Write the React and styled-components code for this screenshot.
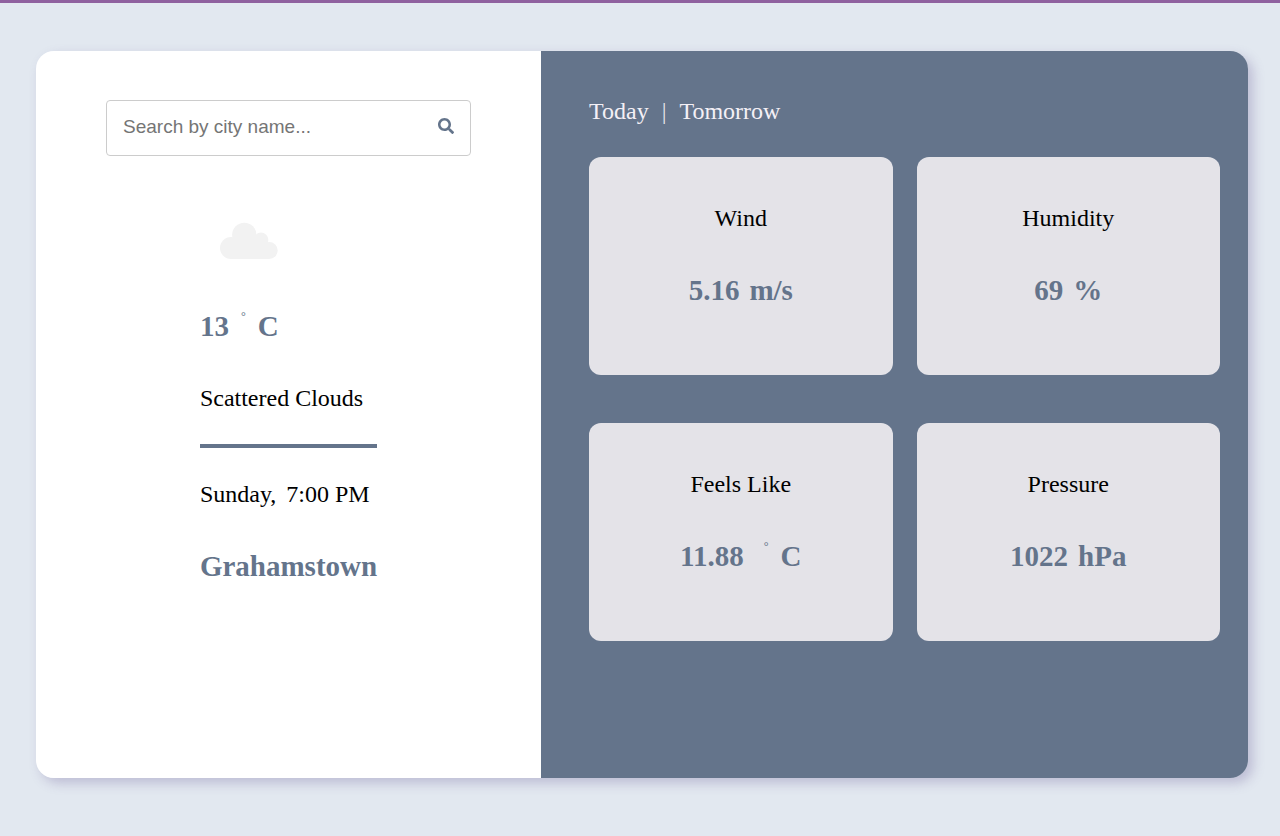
import React from "react";
import styled, { createGlobalStyle } from "styled-components";
import { FaSearch } from "react-icons/fa";

const slate = "#64748b";

const GlobalStyle = createGlobalStyle`
  *, *::before, *::after { box-sizing: border-box; }
  body {
    margin: 0;
    background: #e2e8f0;
    color: #000;
    font-family: "Liberation Serif", "Times New Roman", serif;
    font-size: 24px;
  }
`;

const Page = styled.div`
  display: flex;
  min-height: 100vh;
  padding: 48px 32px 58px 36px;
  border-top: 3px solid #8f619f;
`;

const Panel = styled.main`
  flex: 1;
  display: grid;
  grid-template-columns: 5fr 7fr;
  border-radius: 18px;
  overflow: hidden;
  box-shadow: 5px 5px 12px rgba(95, 75, 139, 0.28);
`;

const Current = styled.section`
  display: flex;
  flex-direction: column;
  align-items: center;
  padding: 49px 70px;
  background: #fff;
`;

const SearchForm = styled.form`
  display: flex;
  align-items: center;
  width: 100%;
  height: 56px;
  padding: 0 16px 2px;
  border: 1px solid #ccc;
  border-radius: 4px;
`;

const SearchInput = styled.input`
  flex: 1;
  min-width: 0;
  padding: 0;
  border: 0;
  outline: 0;
  background: transparent;
  font-family: "Liberation Sans", Arial, sans-serif;
  font-size: 19px;
  line-height: 24px;

  &::placeholder { color: #757575; }
`;

const SearchButton = styled.button`
  display: flex;
  padding: 0 0 2px;
  border: 0;
  background: none;
  color: ${slate};
  font-size: 16px;
  cursor: pointer;
`;

const Summary = styled.div`
  display: flex;
  flex-direction: column;
  padding-top: 36px;
`;

const WeatherIcon = styled.svg`
  width: 96px;
  height: 96px;
  margin-bottom: 20px;
  fill: #f2f2f2;
`;

const Label = styled.p`
  margin: 0;
  line-height: 36px;
`;

const Value = styled.p`
  display: flex;
  gap: ${(p) => p.$gap || 10}px;
  margin: 36px 0 0;
  color: ${slate};
  font-size: 29px;
  font-weight: 700;
  line-height: 36px;
`;

const Temperature = styled(Value)`
  margin: 0 0 36px;
`;

const Degree = styled.span`
  padding-left: ${(p) => (p.$spaced ? 8 : 0)}px;
  font-size: 12px;
  font-weight: 400;
  line-height: 16px;
`;

const Divider = styled.hr`
  width: 100%;
  height: 4px;
  margin: 28px 0;
  border: 0;
  background: ${slate};
`;

const Moment = styled(Label)`
  display: flex;
  gap: 10px;
`;

const Details = styled.section`
  padding: 48px 28px 48px 48px;
  background: ${slate};
`;

const Days = styled.nav`
  display: flex;
  gap: 13px;
  margin-bottom: 34px;
  color: #e4e3e8;
  line-height: 24px;
`;

const DayButton = styled.button`
  padding: 0;
  border: 0;
  background: none;
  color: #f4f0f6;
  font: inherit;
  cursor: pointer;
`;

const Cards = styled.div`
  display: grid;
  grid-template-columns: 1fr 1fr;
  gap: 48px 24px;
`;

const Card = styled.article`
  display: flex;
  flex-direction: column;
  align-items: center;
  padding: 43px 24px 67px;
  border-radius: 12px;
  background: #e4e3e8;
`;

function Cloud() {
  return (
    <WeatherIcon viewBox="0 0 96 96" role="img" aria-label="Scattered clouds">
      <circle cx="31" cy="56" r="11" />
      <circle cx="44.3" cy="43" r="12.2" />
      <circle cx="61" cy="48" r="7.4" />
      <circle cx="69.2" cy="58.5" r="8.5" />
      <path d="M31 46h30l8.2 8v13H31z" />
    </WeatherIcon>
  );
}

export default function App() {
  return (
    <>
      <GlobalStyle />
      <Page>
        <Panel>
          <Current>
            <SearchForm onSubmit={(e) => e.preventDefault()}>
              <SearchInput type="text" aria-label="City name" placeholder="Search by city name..." />
              <SearchButton type="submit" aria-label="Search"><FaSearch /></SearchButton>
            </SearchForm>
            <Summary>
              <Cloud />
              <Temperature $gap={12}><span>13</span><Degree>°</Degree><span>C</span></Temperature>
              <Label>Scattered Clouds</Label>
              <Divider />
              <Moment><span>Sunday,</span><span>7:00 PM</span></Moment>
              <Value>Grahamstown</Value>
            </Summary>
          </Current>
          <Details>
            <Days aria-label="Forecast day">
              <DayButton type="button">Today</DayButton>
              <span>|</span>
              <DayButton type="button">Tomorrow</DayButton>
            </Days>
            <Cards>
              <Card>
                <Label>Wind</Label>
                <Value><span>5.16</span><span>m/s</span></Value>
              </Card>
              <Card>
                <Label>Humidity</Label>
                <Value><span>69</span><span>%</span></Value>
              </Card>
              <Card>
                <Label>Feels Like</Label>
                <Value $gap={12}><span>11.88</span><Degree $spaced>°</Degree><span>C</span></Value>
              </Card>
              <Card>
                <Label>Pressure</Label>
                <Value><span>1022</span><span>hPa</span></Value>
              </Card>
            </Cards>
          </Details>
        </Panel>
      </Page>
    </>
  );
}
